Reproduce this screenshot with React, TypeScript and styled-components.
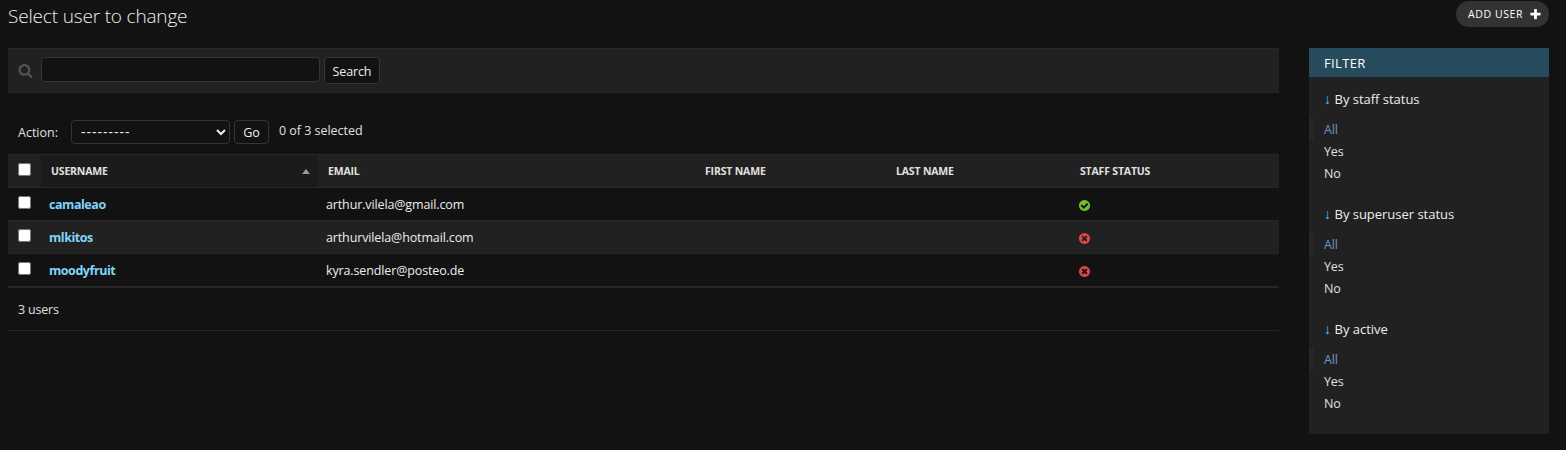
import React from "react";
import styled, { createGlobalStyle } from "styled-components";

const GlobalStyle = createGlobalStyle`
  *, *::before, *::after { box-sizing: border-box; }
  body {
    margin: 0;
    background: #121212;
    color: #eeeeee;
    font: 12.5px/17px "Open Sans", "Noto Sans", sans-serif;
    letter-spacing: -0.13px;
  }
`;

const Page = styled.div`
  height: 450px;
  padding: 1px 17px 0 8px;
  overflow: hidden;
`;

const Header = styled.header`
  display: flex;
  justify-content: space-between;
  align-items: flex-start;
  height: 47px;
`;

const Title = styled.h1`
  margin: 3px 0 0;
  font-size: 19px;
  line-height: 24px;
  font-weight: 300;
  letter-spacing: -0.17px;
  color: #eeeeee;
`;

const AddButton = styled.a`
  display: flex;
  align-items: center;
  justify-content: space-between;
  width: 93px;
  height: 26px;
  padding: 0 7px 0 12px;
  border-radius: 15px;
  background: #333333;
  color: #ffffff;
  font-size: 10.5px;
  letter-spacing: 0.6px;
  white-space: nowrap;
`;

const Columns = styled.div`
  display: flex;
  align-items: flex-start;
  gap: 30px;
`;

const Main = styled.main`
  flex: 1;
  min-width: 0;
`;

const Toolbar = styled.form`
  display: flex;
  align-items: flex-start;
  height: 45px;
  padding: 8px 9px;
  background: #212121;
  border-top: 1px solid #272727;
  border-bottom: 1px solid #272727;
`;

const SearchIcon = styled.svg`
  width: 15px;
  height: 15px;
  margin: 6px 8px 0 1px;
`;

const SearchInput = styled.input`
  width: 279px;
  height: 25px;
  margin: 0 4px 0 0;
  padding: 2px 5px;
  border: 1px solid #353535;
  border-radius: 4px;
  background: #121212;
  color: #eeeeee;
`;

const Button = styled.button<{ $width: number; $height: number }>`
  width: ${(p) => p.$width}px;
  height: ${(p) => p.$height}px;
  padding: 1px 0 0;
  border: 1px solid #353535;
  border-radius: 4px;
  background: #121212;
  color: #eeeeee;
  font: inherit;
  letter-spacing: inherit;
`;

const Actions = styled.div`
  display: flex;
  align-items: flex-start;
  height: 61px;
  padding: 27px 10px 0;
`;

const ActionLabel = styled.label`
  width: 53px;
  margin-top: 4px;
  color: #e0e0e0;
  letter-spacing: 0;
`;

const Select = styled.select`
  width: 159px;
  height: 24px;
  margin: 0 4px 0 0;
  padding: 0 5px 1px;
  border: 1px solid #353535;
  border-radius: 4px;
  background: #121212;
  color: #eeeeee;
  font: inherit;
  font-size: 14px;
  letter-spacing: 1px;
`;

const Counter = styled.span`
  margin: 2px 0 0 10px;
  color: #e0e0e0;
  letter-spacing: -0.03px;
`;

const Table = styled.table`
  width: 100%;
  table-layout: fixed;
  border-collapse: separate;
  border-spacing: 0;
`;

const Col = styled.col<{ $width?: number }>`
  width: ${(p) => (p.$width ? `${p.$width}px` : "auto")};
`;

const HeadCell = styled.th<{ $sorted?: boolean }>`
  height: 34px;
  padding: 0 10px;
  border-top: 1px solid #272727;
  border-bottom: 1px solid #272727;
  background: ${(p) => (p.$sorted ? "#1b1b1b" : "#212121")};
  color: #e0e0e0;
  font-size: 10.5px;
  font-weight: 700;
  text-align: left;
  text-transform: uppercase;
  white-space: nowrap;
  letter-spacing: -0.17px;
`;

const SortLabel = styled.div`
  display: flex;
  align-items: center;
  justify-content: space-between;
`;

const SortArrow = styled.svg`
  width: 8px;
  height: 5px;
  margin: 1px -2px 0 0;
`;

const Row = styled.tr`
  background: #121212;
  &:nth-child(even) { background: #212121; }
`;

const Cell = styled.td<{ $check?: boolean }>`
  height: 33px;
  padding: 0 ${(p) => (p.$check ? 10 : 8)}px;
  border-bottom: 1px solid #272727;
  white-space: nowrap;
`;

const Checkbox = styled.input`
  display: block;
  width: 13px;
  height: 13px;
  margin: 0 0 3px;
`;

const UserLink = styled.a`
  color: #81d4fa;
  font-weight: 700;
  letter-spacing: -0.45px;
`;

const StatusIcon = styled.svg`
  display: block;
  width: 13px;
  height: 13px;
  margin-top: 2px;
`;

const Paginator = styled.p`
  height: 44px;
  margin: 0;
  padding: 13px 10px;
  border-top: 1px solid #272727;
  border-bottom: 1px solid #272727;
  color: #e0e0e0;
  letter-spacing: -0.2px;
`;

const Sidebar = styled.aside`
  width: 240px;
  height: 386px;
  background: #212121;
`;

const FilterTitle = styled.h2`
  height: 29px;
  margin: 0;
  padding: 7px 15px 0;
  background: #264b5d;
  color: #ffffff;
  font-size: 13px;
  font-weight: 400;
  line-height: 17px;
  letter-spacing: 0.35px;
`;

const FilterGroup = styled.section`
  height: 115px;
  padding-top: 14px;
`;

const FilterName = styled.h3`
  display: flex;
  gap: 4.5px;
  height: 27px;
  margin: 0;
  padding: 0 15px;
  font-size: 13px;
  font-weight: 400;
  letter-spacing: -0.02px;
`;

const Arrow = styled.span`
  width: 6px;
  color: #4ac1f7;
  font-family: "Liberation Sans", sans-serif;
  font-size: 14px;
  letter-spacing: 0;
`;

const Choices = styled.ul`
  margin: 0;
  padding: 0;
  list-style: none;
`;

const Choice = styled.li<{ $selected?: boolean }>`
  height: 22px;
  padding: 3px 0 0 10px;
  border-left: 5px solid ${(p) => (p.$selected ? "#272727" : "transparent")};
  color: ${(p) => (p.$selected ? "#6f94c6" : "#e0e0e0")};
`;

const YES_PATH =
  "M1412 734q0-28-18-46l-91-90q-19-19-45-19t-45 19l-408 407-226-226q-19-19-45-19t-45 19l-91 90q-18 18-18 46 0 27 18 45l362 362q19 19 45 19 27 0 46-19l543-543q18-18 18-45zm252 162q0 209-103 385.5t-279.5 279.5-385.5 103-385.5-103-279.5-279.5-103-385.5 103-385.5 279.5-279.5 385.5-103 385.5 103 279.5 279.5 103 385.5z";
const NO_PATH =
  "M1277 1122q0-26-19-45l-181-181 181-181q19-19 19-45 0-27-19-46l-90-90q-19-19-46-19-26 0-45 19l-181 181-181-181q-19-19-45-19-27 0-46 19l-90 90q-19 19-19 46 0 26 19 45l181 181-181 181q-19 19-19 45 0 27 19 46l90 90q19 19 46 19 26 0 45-19l181-181 181 181q19 19 45 19 27 0 46-19l90-90q19-19 19-46zm387-226q0 209-103 385.5t-279.5 279.5-385.5 103-385.5-103-279.5-279.5-103-385.5 103-385.5 279.5-279.5 385.5-103 385.5 103 279.5 279.5 103 385.5z";

const users = [
  { name: "camaleao", email: "arthur.vilela@gmail.com", staff: true },
  { name: "mlkitos", email: "arthurvilela@hotmail.com", staff: false },
  { name: "moodyfruit", email: "kyra.sendler@posteo.de", staff: false },
];

const filters = ["By staff status", "By superuser status", "By active"];

export default function App() {
  return (
    <>
      <GlobalStyle />
      <Page>
        <Header>
          <Title>Select user to change</Title>
          <AddButton>
            ADD USER
            <svg width="13" height="13" viewBox="0 0 1792 1792">
              <path
                fill="#fff"
                d="M1600 736v192q0 40-28 68t-68 28h-416v416q0 40-28 68t-68 28h-192q-40 0-68-28t-28-68v-416h-416q-40 0-68-28t-28-68v-192q0-40 28-68t68-28h416v-416q0-40 28-68t68-28h192q40 0 68 28t28 68v416h416q40 0 68 28t28 68z"
              />
            </svg>
          </AddButton>
        </Header>
        <Columns>
          <Main>
            <Toolbar>
              <SearchIcon viewBox="0 0 1792 1792">
                <path
                  fill="#555"
                  d="M1216 832q0-185-131.5-316.5t-316.5-131.5-316.5 131.5-131.5 316.5 131.5 316.5 316.5 131.5 316.5-131.5 131.5-316.5zm512 832q0 52-38 90t-90 38q-54 0-90-38l-343-342q-179 124-399 124-143 0-273.5-55.5t-225-150-150-225-55.5-273.5 55.5-273.5 150-225 225-150 273.5-55.5 273.5 55.5 225 150 150 225 55.5 273.5q0 220-124 399l343 343q37 37 37 90z"
                />
              </SearchIcon>
              <SearchInput type="text" />
              <Button type="button" $width={56} $height={27}>
                Search
              </Button>
            </Toolbar>
            <Actions>
              <ActionLabel>Action:</ActionLabel>
              <Select>
                <option>---------</option>
              </Select>
              <Button type="button" $width={35} $height={24}>
                Go
              </Button>
              <Counter>0 of 3 selected</Counter>
            </Actions>
            <Table>
              <colgroup>
                <Col $width={33} />
                <Col $width={277} />
                <Col $width={377} />
                <Col $width={191} />
                <Col $width={184} />
                <Col />
              </colgroup>
              <thead>
                <tr>
                  <HeadCell>
                    <Checkbox type="checkbox" />
                  </HeadCell>
                  <HeadCell $sorted>
                    <SortLabel>
                      Username
                      <SortArrow viewBox="0 0 8 5">
                        <path d="M4 0 8 5H0Z" fill="#999" />
                      </SortArrow>
                    </SortLabel>
                  </HeadCell>
                  <HeadCell>Email</HeadCell>
                  <HeadCell>First name</HeadCell>
                  <HeadCell>Last name</HeadCell>
                  <HeadCell>Staff status</HeadCell>
                </tr>
              </thead>
              <tbody>
                {users.map((user) => (
                  <Row key={user.name}>
                    <Cell $check>
                      <Checkbox type="checkbox" />
                    </Cell>
                    <Cell>
                      <UserLink>{user.name}</UserLink>
                    </Cell>
                    <Cell>{user.email}</Cell>
                    <Cell />
                    <Cell />
                    <Cell>
                      <StatusIcon viewBox="0 0 1792 1792">
                        <path
                          fill={user.staff ? "#70bf2b" : "#dd4646"}
                          d={user.staff ? YES_PATH : NO_PATH}
                        />
                      </StatusIcon>
                    </Cell>
                  </Row>
                ))}
              </tbody>
            </Table>
            <Paginator>3 users</Paginator>
          </Main>
          <Sidebar>
            <FilterTitle>FILTER</FilterTitle>
            {filters.map((name) => (
              <FilterGroup key={name}>
                <FilterName>
                  <Arrow>↓</Arrow>
                  {name}
                </FilterName>
                <Choices>
                  <Choice $selected>All</Choice>
                  <Choice>Yes</Choice>
                  <Choice>No</Choice>
                </Choices>
              </FilterGroup>
            ))}
          </Sidebar>
        </Columns>
      </Page>
    </>
  );
}
